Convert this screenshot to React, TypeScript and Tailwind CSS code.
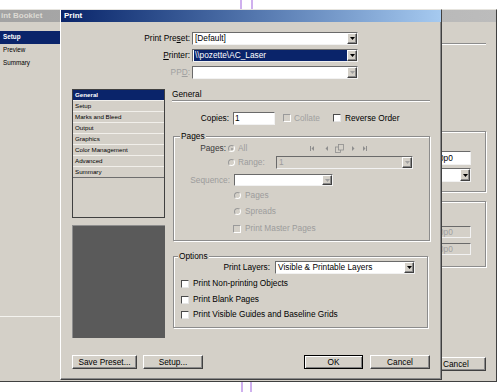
import React from "react";

const sunken =
  "border border-t-[#6a6a6a] border-l-[#6a6a6a] border-r-[#f2f2f2] border-b-[#f2f2f2]";
const raised =
  "border border-t-white border-l-white border-r-[#404040] border-b-[#404040] shadow-[inset_-1px_-1px_0_#8a8a8a]";

function Arrow({ disabled }: { disabled?: boolean }) {
  return (
    <span className={`flex items-center justify-center w-[10px] h-full bg-[#d4d0c8] ${raised}`}>
      <svg width="5" height="3" viewBox="0 0 5 3">
        <polygon points="0,0 5,0 2.5,3" fill={disabled ? "#a0a0a0" : "#000"} />
      </svg>
    </span>
  );
}

function Check({ disabled }: { disabled?: boolean }) {
  return disabled ? (
    <span className="block w-[8px] h-[8px] bg-[#d4d0c8] border border-t-[#9a9a9a] border-l-[#9a9a9a] border-r-white border-b-white" />
  ) : (
    <span className="block w-[8px] h-[8px] bg-white border border-t-[#4a4a4a] border-l-[#4a4a4a] border-r-[#e6e6e6] border-b-[#e6e6e6]" />
  );
}

function Radio({ on }: { on?: boolean }) {
  return (
    <span className="flex items-center justify-center w-[7px] h-[7px] rounded-full bg-[#d4d0c8] border border-t-[#9a9a9a] border-l-[#9a9a9a] border-r-white border-b-white">
      {on ? <span className="block w-[2px] h-[2px] rounded-full bg-[#9a9a9a]" /> : null}
    </span>
  );
}

function Button({ children, def, className }: { children: React.ReactNode; def?: boolean; className: string }) {
  return def ? (
    <div
      className={`flex items-center justify-center h-[14px] bg-[#d4d0c8] border border-black shadow-[inset_1px_1px_0_#fff,inset_-1px_-1px_0_#808080] ${className}`}
    >
      {children}
    </div>
  ) : (
    <div className={`flex items-center justify-center h-[14px] bg-[#d4d0c8] ${raised} ${className}`}>{children}</div>
  );
}

function NavIcons() {
  return (
    <svg width="58" height="9" viewBox="0 0 58 9" className="block">
      <g fill="#8e8e8e">
        <rect x="0" y="2" width="1" height="5" />
        <polygon points="4,2 4,7 1.5,4.5" />
        <polygon points="18,2 18,7 15.5,4.5" />
        <polygon points="42,2 42,7 44.5,4.5" />
        <polygon points="53,2 53,7 55.5,4.5" />
        <rect x="56" y="2" width="1" height="5" />
      </g>
      <g fill="none" stroke="#8e8e8e" strokeWidth="0.8">
        <rect x="25.5" y="3" width="5" height="5.5" />
        <rect x="28.5" y="0.5" width="5" height="5.5" fill="#d4d0c8" />
      </g>
    </svg>
  );
}

function GroupLegend({ text, className }: { text: string; className: string }) {
  return <span className={`absolute -top-[5px] px-[1px] bg-[#d4d0c8] leading-[9px] ${className}`}>{text}</span>;
}

function BookletWindow() {
  return (
    <div className="absolute left-[-14px] top-[9px] w-[511px] h-[373px] bg-[#d4d0c8] border border-t-[#e6e4de] border-l-white border-r-[#404040] border-b-[#404040] flex flex-col">
      <div className="h-[12px] shrink-0 bg-linear-to-r from-[#a2a2a2] to-[#bcbcbc] flex items-center pl-[14px] text-[#dcdad4] font-bold text-[8px]">
        int Booklet
      </div>
      <div className="flex flex-1">
        <div className="w-[74px] h-[295px] border-r border-b border-[#f4f3ef] flex flex-col pt-[9px] text-[6.3px]">
          <div className="h-[13px] bg-[#0a246a] text-white font-bold flex items-center pl-[16px]">Setup</div>
          <div className="h-[13px] flex items-center pl-[16px]">Preview</div>
          <div className="h-[13px] flex items-center pl-[16px]">Summary</div>
        </div>
        <div className="flex-1" />
        <div className="w-[70px] mr-[10px] flex flex-col pt-[21px]">
          <div className="h-[2px] border-t border-b border-t-[#8c8c8c] border-b-white" />
          <div className="mt-[86px] h-[61px] border border-[#8c8c8c] shadow-[inset_1px_1px_0_#fff,1px_1px_0_#fff] flex flex-col items-start pl-[20px] pt-[19px]">
            <div className={`w-[34px] h-[14px] bg-white ${sunken} flex items-center pl-[1px]`}>0p0</div>
            <div className={`mt-[3px] w-[34px] h-[14px] bg-white ${sunken} flex justify-end`}>
              <Arrow />
            </div>
          </div>
          <div className="mt-[9px] h-[66px] border border-[#8c8c8c] shadow-[inset_1px_1px_0_#fff,1px_1px_0_#fff] flex flex-col items-start pl-[20px] pt-[24px]">
            <div className={`w-[34px] h-[12px] ${sunken} flex items-center pl-[1px] text-[#a0a0a0]`}>0p0</div>
            <div className={`mt-[5px] w-[34px] h-[12px] ${sunken} flex items-center pl-[1px] text-[#a0a0a0]`}>0p0</div>
          </div>
          <div className="flex-1" />
          <div className="flex justify-end mb-[10px]">
            <Button className="w-[45px] justify-start! pl-[1px]">Cancel</Button>
          </div>
        </div>
      </div>
    </div>
  );
}

function TopField({ label, children }: { label: React.ReactNode; children: React.ReactNode }) {
  return (
    <div className="flex items-center h-[13px]">
      <div className="w-[129px] text-right pr-[0px]">{label}</div>
      <div className="ml-[2px] w-[166px] h-[13px]">{children}</div>
    </div>
  );
}

function PrintDialog() {
  const items = ["General", "Setup", "Marks and Bleed", "Output", "Graphics", "Color Management", "Advanced", "Summary"];
  return (
    <div className="absolute left-[60px] top-[9px] w-[382px] h-[371px] bg-[#d4d0c8] border border-t-[#e6e4de] border-l-white border-r-[#404040] border-b-[#404040] shadow-[inset_-1px_-1px_0_#8a8a8a] flex flex-col">
      <div className="h-[12px] shrink-0 bg-linear-to-r from-[#0a246a] to-[#a6caf0] flex items-center pl-[3px] text-white font-bold text-[8px]">
        Print
      </div>
      <div className="flex flex-col pt-[10px]">
        <TopField
          label={
            <span>
              Print Pre<span className="underline">s</span>et:
            </span>
          }
        >
          <div className={`flex h-full bg-white ${sunken}`}>
            <span className="flex-1 flex items-center pl-[2px]">[Default]</span>
            <Arrow />
          </div>
        </TopField>
        <div className="h-[4px]" />
        <TopField
          label={
            <span>
              <span className="underline">P</span>rinter:
            </span>
          }
        >
          <div className={`flex h-full bg-white ${sunken}`}>
            <span className="flex-1 flex items-center pl-[1px]">
              <span className="flex items-center h-[11px] w-full bg-[#0a246a] text-white pl-[1px]">\\pozette\AC_Laser</span>
            </span>
            <Arrow />
          </div>
        </TopField>
        <div className="h-[4px]" />
        <TopField
          label={
            <span className="text-[#a0a0a0]">
              PP<span className="underline">D</span>:
            </span>
          }
        >
          <div className={`flex h-full bg-white ${sunken}`}>
            <span className="flex-1" />
            <Arrow disabled />
          </div>
        </TopField>

        <div className="mt-[10px] flex h-[249px] pl-[11px]">
          <div className="w-[93px] flex flex-col">
            <div className="h-[130px] border border-[#404040] bg-[#d4d0c8] flex flex-col text-[6.2px]">
              {items.map((t, i) =>
                i === 0 ? (
                  <div key={t} className="h-[10px] bg-[#0a246a] text-white font-bold flex items-center pl-[2px]">
                    {t}
                  </div>
                ) : (
                  <div key={t} className="h-[11px] border-t border-[#f1efea] flex items-center pl-[2px]">
                    {t}
                  </div>
                )
              )}
              <div className="border-t border-[#6e6e6e]" />
            </div>
            <div className="mt-[7px] h-[113px] bg-[#5a5a5a] border-t border-l border-[#8e8e8e]" />
          </div>

          <div className="ml-[7px] w-[258px] flex flex-col">
            <div className="h-[11px] flex items-center">General</div>
            <div className="h-[2px] border-t border-b border-t-[#8c8c8c] border-b-white" />
            <div className="mt-[10px] flex items-center h-[13px]">
              <div className="w-[57px] text-right">Copies:</div>
              <div className={`ml-[4px] w-[42px] h-[13px] bg-white ${sunken} flex items-center pl-[1px]`}>1</div>
              <div className="ml-[8px] w-[50px] flex items-center">
                <Check disabled />
                <span className="ml-[3px] text-[#a0a0a0]">Collate</span>
              </div>
              <div className="flex items-center">
                <Check />
                <span className="ml-[4px]">Reverse Order</span>
              </div>
            </div>

            <div className="relative mt-[11px] ml-[1px] w-[257px] h-[105px] border border-[#8c8c8c] shadow-[inset_1px_1px_0_#fff,1px_1px_0_#fff] flex flex-col text-[#9c9c9c]">
              <GroupLegend text="Pages" className="left-[6px] text-black" />
              <div className="mt-[6px] h-[11px] flex items-center">
                <div className="w-[52px] text-right text-[#3a3a3a]">Pages:</div>
                <div className="ml-[2px]">
                  <Radio on />
                </div>
                <span className="ml-[3px]">All</span>
                <div className="ml-[63px]">
                  <NavIcons />
                </div>
              </div>
              <div className="mt-[2px] h-[13px] flex items-center">
                <div className="ml-[54px]">
                  <Radio />
                </div>
                <span className="ml-[3px] w-[35px]">Range:</span>
                <div className={`ml-[3px] w-[137px] h-[13px] ${sunken} flex`}>
                  <span className="flex-1 flex items-center pl-[2px]">1</span>
                  <Arrow disabled />
                </div>
              </div>
              <div className="mt-[5px] h-[12px] flex items-center">
                <div className="w-[56px] text-right">Sequence:</div>
                <div className={`ml-[4px] w-[99px] h-[12px] bg-white ${sunken} flex`}>
                  <span className="flex-1" />
                  <Arrow disabled />
                </div>
              </div>
              <div className="mt-[4px] h-[11px] flex items-center pl-[60px]">
                <Radio />
                <span className="ml-[4px]">Pages</span>
              </div>
              <div className="mt-[5px] h-[11px] flex items-center pl-[60px]">
                <Radio />
                <span className="ml-[4px]">Spreads</span>
              </div>
              <div className="mt-[6px] h-[11px] flex items-center pl-[59px]">
                <Check disabled />
                <span className="ml-[4px]">Print Master Pages</span>
              </div>
            </div>

            <div className="relative mt-[15px] ml-[1px] w-[255px] h-[72px] border border-[#8c8c8c] shadow-[inset_1px_1px_0_#fff,1px_1px_0_#fff] flex flex-col">
              <GroupLegend text="Options" className="left-[4px]" />
              <div className="mt-[4px] h-[13px] flex items-center">
                <div className="w-[96px] text-right">Print Layers:</div>
                <div className={`ml-[5px] w-[140px] h-[13px] bg-white ${sunken} flex`}>
                  <span className="flex-1 flex items-center pl-[2px]">Visible &amp; Printable Layers</span>
                  <Arrow />
                </div>
              </div>
              <div className="mt-[5px] h-[9px] flex items-center pl-[7px]">
                <Check />
                <span className="ml-[4px]">Print Non-printing Objects</span>
              </div>
              <div className="mt-[7px] h-[9px] flex items-center pl-[7px]">
                <Check />
                <span className="ml-[4px]">Print Blank Pages</span>
              </div>
              <div className="mt-[6px] h-[9px] flex items-center pl-[7px]">
                <Check />
                <span className="ml-[4px]">Print Visible Guides and Baseline Grids</span>
              </div>
            </div>
          </div>
        </div>

        <div className="mt-[17px] flex items-center pl-[11px] pr-[11px]">
          <Button className="w-[65px]">Save Preset...</Button>
          <Button className="ml-[6px] w-[60px]">Setup...</Button>
          <div className="flex-1" />
          <Button def className="w-[59px]">OK</Button>
          <Button className="ml-[7px] w-[60px]">Cancel</Button>
        </div>
      </div>
    </div>
  );
}

export default function App() {
  return (
    <div className="relative w-[500px] h-[392px] overflow-hidden bg-white font-['Liberation_Sans',Arial,sans-serif] text-black text-[8.3px] leading-none">
      <div className="absolute left-[240px] top-0 w-[2px] h-[10px] bg-[#cfb0ee]" />
      <div className="absolute left-[251px] top-0 w-[2px] h-[10px] bg-[#cfb0ee]" />
      <div className="absolute left-[241px] top-[381px] w-[2px] h-[11px] bg-[#cfb0ee]" />
      <div className="absolute left-[250px] top-[381px] w-[2px] h-[11px] bg-[#cfb0ee]" />
      <BookletWindow />
      <PrintDialog />
    </div>
  );
}
